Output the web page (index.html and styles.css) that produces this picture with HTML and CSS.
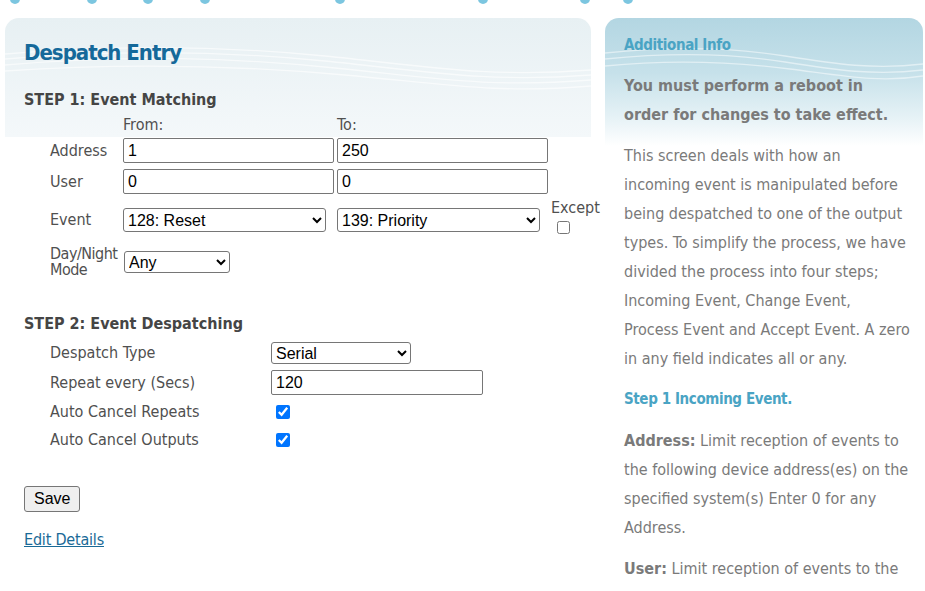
FILE: index.html
```html
<!DOCTYPE html>
<html lang="en">
<head>
<meta charset="utf-8">
<title>Despatch Entry</title>
<link rel="stylesheet" href="styles.css">
</head>
<body>
<div class="dots">
  <span class="dot d1"></span><span class="dot d2"></span><span class="dot d3"></span><span class="dot d4"></span><span class="dot d5"></span><span class="dot d6"></span><span class="dot d7"></span><span class="dot d8"></span>
</div>
<div class="layout">
  <div class="main">
    <h1 class="title">Despatch Entry</h1>
    <h2 class="step">STEP 1: Event Matching</h2>
    <div class="match">
      <span></span>
      <span class="colhead">From:</span>
      <span class="colhead">To:</span>
      <span></span>

      <span class="lbl">Address</span>
      <input class="txt" type="text" value="1">
      <input class="txt" type="text" value="250">
      <span></span>

      <span class="lbl">User</span>
      <input class="txt" type="text" value="0">
      <input class="txt" type="text" value="0">
      <span></span>

      <span class="lbl">Event</span>
      <select class="sel sel-event"><option>128: Reset</option></select>
      <select class="sel sel-event"><option>139: Priority</option></select>
      <span class="except"><span class="except-lbl">Except</span><input class="except-box" type="checkbox"></span>

      <span class="lbl lbl-two">Day/Night<br>Mode</span>
      <select class="sel sel-mode"><option>Any</option></select>
      <span></span>
      <span></span>
    </div>

    <h2 class="step step2">STEP 2: Event Despatching</h2>
    <div class="despatch">
      <span class="lbl">Despatch Type</span>
      <select class="sel sel-type"><option>Serial</option></select>

      <span class="lbl">Repeat every (Secs)</span>
      <input class="txt txt-repeat" type="text" value="120">

      <span class="lbl">Auto Cancel Repeats</span>
      <input class="chk" type="checkbox" checked>

      <span class="lbl">Auto Cancel Outputs</span>
      <input class="chk" type="checkbox" checked>
    </div>

    <button class="save" type="button">Save</button>
    <a class="edit" href="#">Edit Details</a>
  </div>

  <div class="side">
    <h3 class="side-title">Additional Info</h3>
    <p class="side-p strong">You must perform a reboot in<br>order for changes to take effect.</p>
    <p class="side-p">This screen deals with how an<br>incoming event is manipulated before<br>being despatched to one of the output<br>types. To simplify the process, we have<br>divided the process into four steps;<br>Incoming Event, Change Event,<br>Process Event and Accept Event. A zero<br>in any field indicates all or any.</p>
    <h4 class="side-sub">Step 1 Incoming Event.</h4>
    <p class="side-p"><b>Address:</b> Limit reception of events to<br>the following device address(es) on the<br>specified system(s) Enter 0 for any<br>Address.</p>
    <p class="side-p"><b>User:</b> Limit reception of events to the<br>following user numbers from the specified</p>
  </div>
</div>
</body>
</html>
```

FILE: styles.css
```css
html, body {
  margin: 0;
  padding: 0;
  background: #ffffff;
  font-family: "DejaVu Sans Condensed", "DejaVu Sans", sans-serif;
  overflow: hidden;
}

.dots {
  height: 18px;
  display: flex;
  overflow: hidden;
}
.dot {
  width: 10px;
  height: 10px;
  border-radius: 50%;
  background: #7cc6e0;
  margin-top: -6px;
  flex: none;
}
.d1 { margin-left: 10px; }
.d2 { margin-left: 67px; }
.d3 { margin-left: 46px; }
.d4 { margin-left: 47px; }
.d5 { margin-left: 125px; }
.d6 { margin-left: 133px; }
.d7 { margin-left: 92px; }
.d8 { margin-left: 33px; }

.layout {
  display: flex;
  align-items: flex-start;
  gap: 14px;
  padding-left: 5px;
}

.main {
  width: 586px;
  box-sizing: border-box;
  padding: 0 19px 40px;
  border-radius: 14px 14px 0 0;
  background:
    url("data:image/svg+xml,%3Csvg xmlns='http://www.w3.org/2000/svg' viewBox='0 0 586 119' preserveAspectRatio='none'%3E%3Cg fill='none' stroke='%23ffffff' stroke-width='1.3' stroke-opacity='0.6'%3E%3Cpath d='M0 36 C120 26 220 28 320 38 S480 60 586 52'/%3E%3Cpath d='M0 41 C120 31 220 33 320 43 S480 65 586 57'/%3E%3Cpath d='M0 47 C130 36 230 40 330 50 S480 70 586 62'/%3E%3Cpath d='M0 53 C130 44 240 48 340 57 S490 76 586 68'/%3E%3C/g%3E%3C/svg%3E") top left / 100% 119px no-repeat,
    linear-gradient(#e7f0f3, #f4f8fa) top left / 100% 119px no-repeat,
    #ffffff;
}

.title {
  margin: 0;
  padding-top: 22px;
  font-size: 22px;
  line-height: 26px;
  font-weight: bold;
  color: #15699a;
  letter-spacing: -1px;
}

.step {
  margin: 24px 0 0;
  font-size: 16px;
  line-height: 20px;
  font-weight: bold;
  color: #454545;
}
.step2 {
  margin-top: 36px;
}

.match {
  display: grid;
  grid-template-columns: 73px 214px 214px auto;
  grid-template-rows: 17px 25px 25px 40px 32px;
  row-gap: 6px;
  margin-top: 5px;
  padding-left: 26px;
}

.lbl {
  font-size: 16px;
  line-height: 16px;
  color: #505050;
  align-self: center;
  white-space: nowrap;
}
.lbl-two {
  line-height: 16px;
  letter-spacing: -0.5px;
}
.colhead {
  font-size: 16px;
  line-height: 14px;
  color: #505050;
  align-self: end;
}

.txt {
  width: 211px;
  height: 25px;
  box-sizing: border-box;
  border: 1px solid #767676;
  border-radius: 2px;
  padding: 1px 4px;
  margin: 0;
  font-family: "Liberation Sans", Arial, sans-serif;
  font-size: 16px;
  color: #000;
  background: #fff;
}
.txt-repeat {
  width: 212px;
}

.sel {
  height: 24px;
  box-sizing: border-box;
  margin: 0;
  font-family: "Liberation Sans", Arial, sans-serif;
  font-size: 16px;
  color: #000;
  background: #fff;
  border: 1px solid #767676;
  border-radius: 3px;
  align-self: center;
}
.sel-event { width: 203px; }
.sel-mode { width: 106px; height: 22px; margin-left: 1px; }
.sel-type { width: 140px; height: 22px; }

.except {
  display: flex;
  flex-direction: column;
  align-items: flex-start;
  align-self: start;
}
.except-lbl {
  font-size: 16px;
  line-height: 16px;
  color: #505050;
}
.except-box {
  margin: 5px 0 0 6px;
  width: 13px;
  height: 13px;
}

.despatch {
  display: grid;
  grid-template-columns: 221px auto;
  grid-template-rows: 22px 25px 22px 22px;
  row-gap: 6px;
  margin-top: 8px;
  padding-left: 26px;
  justify-items: start;
}
.chk {
  margin: 0 0 0 5px;
  width: 14px;
  height: 14px;
  align-self: center;
}

.save {
  display: block;
  margin-top: 35px;
  height: 26px;
  padding: 2px 9px;
  font-family: "Liberation Sans", Arial, sans-serif;
  font-size: 16px;
  color: #000;
  background: #efefef;
  border: 1px solid #767676;
  border-radius: 3px;
}

.edit {
  display: inline-block;
  margin-top: 18px;
  font-size: 16px;
  line-height: 20px;
  color: #1a6a97;
  text-decoration: underline;
  letter-spacing: -0.2px;
}

.side {
  width: 318px;
  box-sizing: border-box;
  padding: 17px 8px 0 19px;
  border-radius: 14px 14px 0 0;
  background:
    url("data:image/svg+xml,%3Csvg xmlns='http://www.w3.org/2000/svg' viewBox='0 0 318 125' preserveAspectRatio='none'%3E%3Cg fill='none' stroke='%23ffffff' stroke-width='1.3' stroke-opacity='0.5'%3E%3Cpath d='M0 35 C70 28 130 30 180 38 S270 52 318 46'/%3E%3Cpath d='M0 41 C70 34 130 36 180 44 S270 58 318 52'/%3E%3Cpath d='M0 48 C70 41 130 44 185 51 S275 65 318 58'/%3E%3C/g%3E%3C/svg%3E") top left / 100% 125px no-repeat,
    linear-gradient(#b3d6e2 0, #c6e1ea 55px, #e6f2f6 100px, #ffffff 128px) top left / 100% 128px no-repeat,
    #ffffff;
}

.side-title {
  margin: 0;
  font-size: 15px;
  line-height: 20px;
  font-weight: bold;
  color: #4aa4c4;
  letter-spacing: -0.4px;
}

.side-p {
  margin: 0 0 12px;
  font-size: 16px;
  line-height: 29px;
  color: #7a7a7a;
  white-space: nowrap;
}
.side-p b {
  font-weight: bold;
}
.strong {
  margin-top: 16px;
  font-weight: bold;
}

.side-sub {
  margin: 0 0 12px;
  font-size: 15px;
  line-height: 29px;
  font-weight: bold;
  color: #4aa4c4;
  letter-spacing: -0.4px;
}
```
